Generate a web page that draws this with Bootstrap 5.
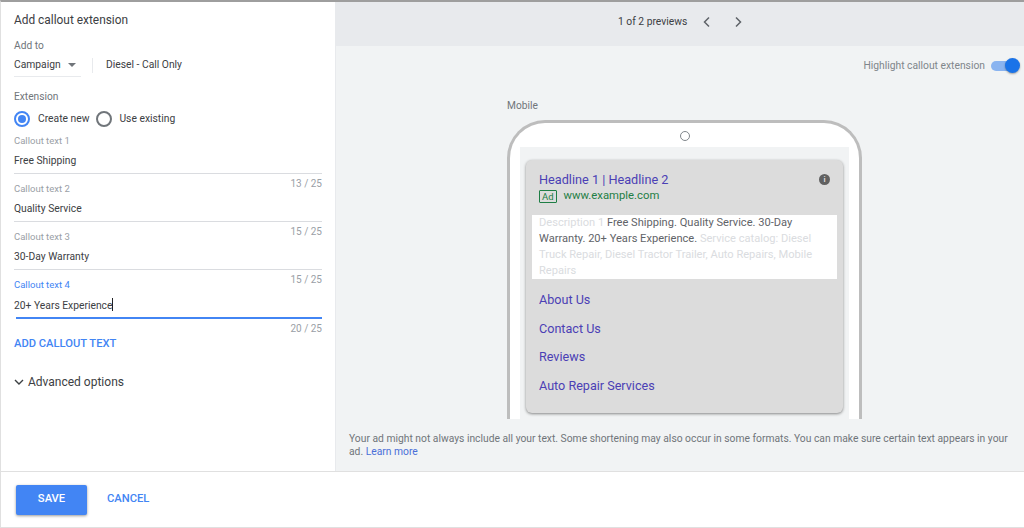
<!DOCTYPE html>
<html lang="en">

<head>
    <meta charset="UTF-8">
    <title>Add callout extension</title>
    <link rel="stylesheet" href="https://cdn.jsdelivr.net/npm/bootstrap@5.3.0/dist/css/bootstrap.min.css">
    <style>
        html, body { height: 100%; overflow: hidden; }
        body { font-family: Roboto, "Liberation Sans", sans-serif; font-size: 10.3px; color: #3c4043; background: #fff; }
        .shell { height: 528px; border-top: 2px solid #9e9e9e; border-bottom: 1px solid #e0e0e0; border-left: 1px solid #e0e0e0; }
        .main-area { height: 469px; }
        .side { width: 335px; flex: none; border-right: 1px solid #e8eaed; padding: 0 13px; }
        .side-title { font-size: 11.9px; line-height: 16px; padding-top: 10px; color: #3c4043; }
        .lbl { font-size: 10.2px; line-height: 14px; color: #70757a; }
        .lbl-top { margin-top: 11px; }
        .lbl-ext { margin-top: 13px; }
        .add-to { height: 24px; width: 228px; }
        .scope-select { width: 67px; height: 24px; border-bottom: 1px solid #e8eaed; }
        .caret-down { width: 0; height: 0; border-left: 4px solid transparent; border-right: 4px solid transparent; border-top: 4px solid #70757a; margin-left: 7px; }
        .scope-sep { width: 1px; height: 15px; background: #e8eaed; margin: 0 13px 0 11px; }
        .radio-on, .radio-off { width: 16px; height: 16px; border-radius: 50%; flex: none; }
        .radio-on { border: 2px solid #4285f4; padding: 2px; background: #4285f4; background-clip: content-box; margin-right: 1px; }
        .radio-off { border: 2px solid #70757a; }
        .radio-row { height: 16px; margin-top: 7px; gap: 7px; }
        .field-list { margin-top: 7px; }
        .field { height: 48px; }
        .field-lbl { font-size: 9.5px; line-height: 14px; color: #9aa0a6; }
        .field-lbl.on { color: #4285f4; }
        .field-val { font-size: 10.3px; line-height: 14px; margin-top: 6px; color: #3c4043; height: 19px; border-bottom: 1px solid #dadce0; box-sizing: content-box; }
        .field-val.on { border-bottom: 2px solid #4285f4; margin-left: 2px; text-indent: -2px; }
        .caret-bar { display: inline-block; width: 1px; height: 13px; background: #202124; vertical-align: -2px; }
        .counter { font-size: 10px; line-height: 12px; text-align: right; color: #9aa0a6; margin-top: 4px; }
        .add-link { font-size: 11.2px; font-weight: 500; line-height: 14px; color: #4285f4; margin-top: 11px; }
        .adv-row { font-size: 12px; line-height: 16px; margin-top: 23px; gap: 4px; color: #3c4043; }
        .preview { background: #f1f3f4; }
        .preview-head { height: 44px; background: #e8eaed; gap: 11px; padding-bottom: 4px; }
        .chev-next { margin-left: 10px; }
        .pager-txt { margin-left: 282px; }
        .highlight-row { height: 40px; gap: 6px; padding-right: 8px; color: #80868b; font-size: 10.3px; }
        .toggle-track { width: 25px; height: 10px; border-radius: 5px; background: #8ab4f0; position: relative; }
        .toggle-knob { width: 15px; height: 15px; border-radius: 50%; background: #1a73e8; position: absolute; right: -4px; top: -3px; box-shadow: 0 1px 2px rgba(0,0,0,.35); }
        .mobile-wrap { width: 355px; margin-left: 171px; }
        .mobile-lbl { font-size: 10.2px; line-height: 14px; color: #70757a; padding-top: 13px; }
        .phone { height: 299px; margin-top: 7px; border: 3px solid #bdbdbd; border-bottom: 0; border-radius: 38px 38px 0 0; background: #fff; padding: 0 10px; }
        .phone-cam { width: 10px; height: 10px; border-radius: 50%; border: 1px solid #80868b; margin: 8px auto 6px; }
        .screen { height: 272px; background: #f1f3f4; padding: 13px 6px 0; }
        .ad-box { height: 253px; background: #dcdcdc; border-radius: 6px; box-shadow: 0 1px 3px rgba(0,0,0,.45); padding-top: 12px; }
        .ad-head { padding: 0 13px; height: 43px; }
        .ad-title { font-size: 12.7px; line-height: 16px; color: #4b3fb5; }
        .ad-tag { border: 1px solid #1e7e45; border-radius: 1px; font-size: 9.5px; line-height: 11px; padding: 0 2px; color: #1e7e45; margin-right: 7px; }
        .ad-url { font-size: 11.3px; line-height: 16px; color: #1e7e45; }
        .info-dot { width: 11px; height: 11px; border-radius: 50%; background: #616161; color: #dcdcdc; font-size: 8px; line-height: 11px; text-align: center; font-weight: 700; margin-top: 2px; }
        .ad-desc { background: #fff; margin: 0 6px; padding: 0 7px; height: 64px; font-size: 11.1px; line-height: 16px; color: #5f6368; }
        .dim-txt { color: #dadce0; }
        .ad-links { padding: 7px 13px 0; }
        .ad-link { font-size: 12.6px; line-height: 16px; height: 28.7px; padding-top: 6px; color: #4b3fb5; }
        .note { font-size: 10.3px; line-height: 13px; color: #70757a; padding: 13px 8px 0 13px; }
        .note a { color: #4a6fd8; text-decoration: none; }
        .foot { height: 56px; border-top: 1px solid #e0e0e0; padding-left: 15px; gap: 20px; }
        .btn-save { width: 71px; height: 30px; padding: 0; background: #4285f4; border: 0; border-radius: 2px; color: #fff; font-size: 11.2px; font-weight: 500; box-shadow: 0 1px 3px rgba(0,0,0,.4); }
        .btn-cancel { font-size: 11.2px; font-weight: 500; color: #4285f4; padding: 0; border: 0; }
    </style>
</head>

<body>
    <div class="shell d-flex flex-column">
        <div class="main-area d-flex">
            <div class="side">
                <div class="side-title">Add callout extension</div>
                <div class="lbl lbl-top">Add to</div>
                <div class="add-to d-flex align-items-center">
                    <div class="scope-select d-flex align-items-center">Campaign<span class="caret-down"></span></div>
                    <div class="scope-sep"></div>
                    <div>Diesel - Call Only</div>
                </div>
                <div class="lbl lbl-ext">Extension</div>
                <div class="radio-row d-flex align-items-center">
                    <span class="radio-on"></span><span>Create new</span>
                    <span class="radio-off"></span><span>Use existing</span>
                </div>
                <div id="fields" class="field-list"></div>
                <div class="add-link">ADD CALLOUT TEXT</div>
                <div class="adv-row d-flex align-items-center">
                    <svg width="10" height="7" viewBox="0 0 10 7"><path d="M1 1l4 4 4-4" fill="none" stroke="#3c4043" stroke-width="1.4"/></svg>
                    <span>Advanced options</span>
                </div>
            </div>
            <div class="preview flex-grow-1">
                <div class="preview-head d-flex align-items-center">
                    <span class="pager-txt">1 of 2 previews</span>
                    <svg class="ms-1" width="10" height="12" viewBox="0 0 10 12"><path d="M7 1.5L2.5 6 7 10.5" fill="none" stroke="#5f6368" stroke-width="1.5"/></svg>
                    <svg class="chev-next" width="10" height="12" viewBox="0 0 10 12"><path d="M3 1.5L7.5 6 3 10.5" fill="none" stroke="#5f6368" stroke-width="1.5"/></svg>
                </div>
                <div class="highlight-row d-flex align-items-center justify-content-end">
                    <span>Highlight callout extension</span>
                    <div class="toggle-track"><div class="toggle-knob"></div></div>
                </div>
                <div class="mobile-wrap">
                    <div class="mobile-lbl">Mobile</div>
                    <div class="phone">
                        <div class="phone-cam"></div>
                        <div class="screen">
                            <div class="ad-box">
                                <div class="ad-head d-flex justify-content-between">
                                    <div>
                                        <div class="ad-title">Headline 1 | Headline 2</div>
                                        <div class="d-flex align-items-center"><span class="ad-tag">Ad</span><span class="ad-url">www.example.com</span></div>
                                    </div>
                                    <div class="info-dot">i</div>
                                </div>
                                <div class="ad-desc"><span class="dim-txt">Description 1</span> Free Shipping. Quality Service. 30-Day Warranty. 20+ Years Experience. <span class="dim-txt">Service catalog: Diesel Truck Repair, Diesel Tractor Trailer, Auto Repairs, Mobile Repairs</span></div>
                                <div class="ad-links">
                                    <div class="ad-link">About Us</div>
                                    <div class="ad-link">Contact Us</div>
                                    <div class="ad-link">Reviews</div>
                                    <div class="ad-link">Auto Repair Services</div>
                                </div>
                            </div>
                        </div>
                    </div>
                </div>
                <div class="note">Your ad might not always include all your text. Some shortening may also occur in some formats. You can make sure certain text appears in your ad. <a href="#">Learn more</a></div>
            </div>
        </div>
        <div class="foot d-flex align-items-center">
            <button class="btn btn-save">SAVE</button>
            <button class="btn btn-cancel">CANCEL</button>
        </div>
    </div>

    <script>
        const callouts = [
            { text: "Free Shipping", count: "13 / 25" },
            { text: "Quality Service", count: "15 / 25" },
            { text: "30-Day Warranty", count: "15 / 25" },
            { text: "20+ Years Experience", count: "20 / 25", active: true }
        ];
        const fields = document.getElementById('fields');
        callouts.forEach((item, index) => {
            const on = item.active ? 'on' : '';
            const bar = item.active ? '<span class="caret-bar"></span>' : '';
            fields.innerHTML += `
                <div class="field">
                    <div class="field-lbl ${on}">Callout text ${index + 1}</div>
                    <div class="field-val ${on}">${item.text}${bar}</div>
                    <div class="counter">${item.count}</div>
                </div>`;
        });
    </script>
    <script src="https://cdn.jsdelivr.net/npm/bootstrap@5.3.0/dist/js/bootstrap.bundle.min.js"></script>
</body>

</html>
